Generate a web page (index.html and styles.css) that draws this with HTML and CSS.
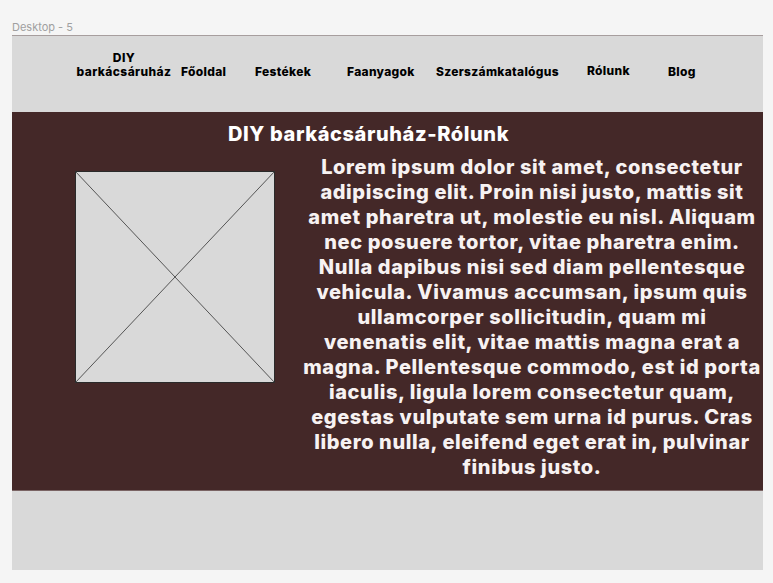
FILE: index.html
```html
<!DOCTYPE html>
<html lang="hu">
<head>
    <meta charset="UTF-8">
    <meta name="viewport" content="width=device-width, initial-scale=1.0">
    <title>DIY barkácsáruház - Rólunk</title>
    <link rel="stylesheet" href="styles.css">
</head>
<body>

    <div class="frameLabel">Desktop - 5</div>

    <div class="frame">

        <header class="topbar">
            <div class="brand">DIY<br>barkácsáruház</div>
            <nav class="menu">
                <a class="menuItem m1" href="#">Főoldal</a>
                <a class="menuItem m2" href="#">Festékek</a>
                <a class="menuItem m3" href="#">Faanyagok</a>
                <a class="menuItem m4" href="#">Szerszámkatalógus</a>
                <a class="menuItem m5 up" href="#">Rólunk</a>
                <a class="menuItem m6" href="#">Blog</a>
            </nav>
        </header>

        <section class="about">
            <h1>DIY barkácsáruház-Rólunk</h1>

            <div class="content">
                <div class="picture">
                    <svg width="200" height="212" viewBox="0 0 200 212" preserveAspectRatio="none">
                        <rect x="0.5" y="0.5" width="199" height="211" fill="#d9d9d9" stroke="#2a2a2a" stroke-width="1"/>
                        <line x1="0" y1="0" x2="200" y2="212" stroke="#333" stroke-width="0.8"/>
                        <line x1="200" y1="0" x2="0" y2="212" stroke="#333" stroke-width="0.8"/>
                    </svg>
                </div>

                <p class="text">Lorem ipsum dolor sit amet, consectetur adipiscing elit. Proin nisi justo, mattis sit amet pharetra ut, molestie eu nisl. Aliquam nec posuere tortor, vitae pharetra enim. Nulla dapibus nisi sed diam pellentesque vehicula. Vivamus accumsan, ipsum quis ullamcorper sollicitudin, quam mi venenatis&nbsp;elit, vitae mattis magna erat a magna. Pellentesque commodo, est id porta iaculis, ligula lorem consectetur quam, egestas vulputate sem urna id purus. Cras libero nulla, eleifend eget erat in, pulvinar finibus justo.</p>
            </div>
        </section>

        <footer class="bottom"></footer>

    </div>

</body>
</html>
```

FILE: styles.css
```css
body {
    margin: 0;
    background-color: #f5f5f5;
    font-family: Inter, "Noto Sans", sans-serif;
}

.frameLabel {
    height: 35px;
    padding-left: 12px;
    box-sizing: border-box;
    padding-top: 21px;
    font-size: 11px;
    line-height: 13px;
    color: #a0a0a0;
}

.frame {
    margin-left: 12px;
    width: 751px;
}

.topbar {
    height: 77px;
    box-sizing: border-box;
    background-color: #d9d9d9;
    border-top: 1px solid #a79e9e;
    display: flex;
    align-items: flex-start;
    padding-left: 62px;
    padding-top: 15px;
}

.brand {
    width: 100px;
    font-size: 12px;
    font-weight: 800;
    line-height: 14px;
    letter-spacing: 0.4px;
    text-align: center;
    color: #000;
}

.menu {
    display: flex;
    padding-top: 14px;
}

.menuItem {
    color: #000;
    text-decoration: none;
    font-size: 12px;
    font-weight: 800;
    line-height: 14px;
    letter-spacing: 0.3px;
    white-space: nowrap;
}

.up {
    margin-top: -1px;
}

.m1 { margin-left: 7px; width: 45px; }
.m2 { margin-left: 29px; width: 55px; }
.m3 { margin-left: 37px; width: 66px; }
.m4 { margin-left: 23px; width: 121px; }
.m5 { margin-left: 30px; width: 42px; }
.m6 { margin-left: 39px; }

.about {
    height: 378px;
    box-sizing: border-box;
    background-color: #442828;
    color: #fff;
    padding-top: 10px;
}

.about h1 {
    margin: 0;
    padding-left: 216px;
    font-size: 20px;
    font-weight: 800;
    line-height: 24px;
    letter-spacing: 0.6px;
}

.content {
    display: flex;
    align-items: flex-start;
    margin-top: 9px;
}

.picture {
    margin-left: 63px;
    margin-top: 16px;
    width: 200px;
    height: 212px;
}

.picture svg {
    display: block;
}

.text {
    margin: 0 0 0 26px;
    width: 462px;
    font-size: 20px;
    font-weight: 800;
    line-height: 25px;
    letter-spacing: 0.6px;
    text-align: center;
    color: #f7f2f2;
}

.bottom {
    height: 79px;
    background-color: #d9d9d9;
    border-top: 1px solid #7a6464;
}
```
